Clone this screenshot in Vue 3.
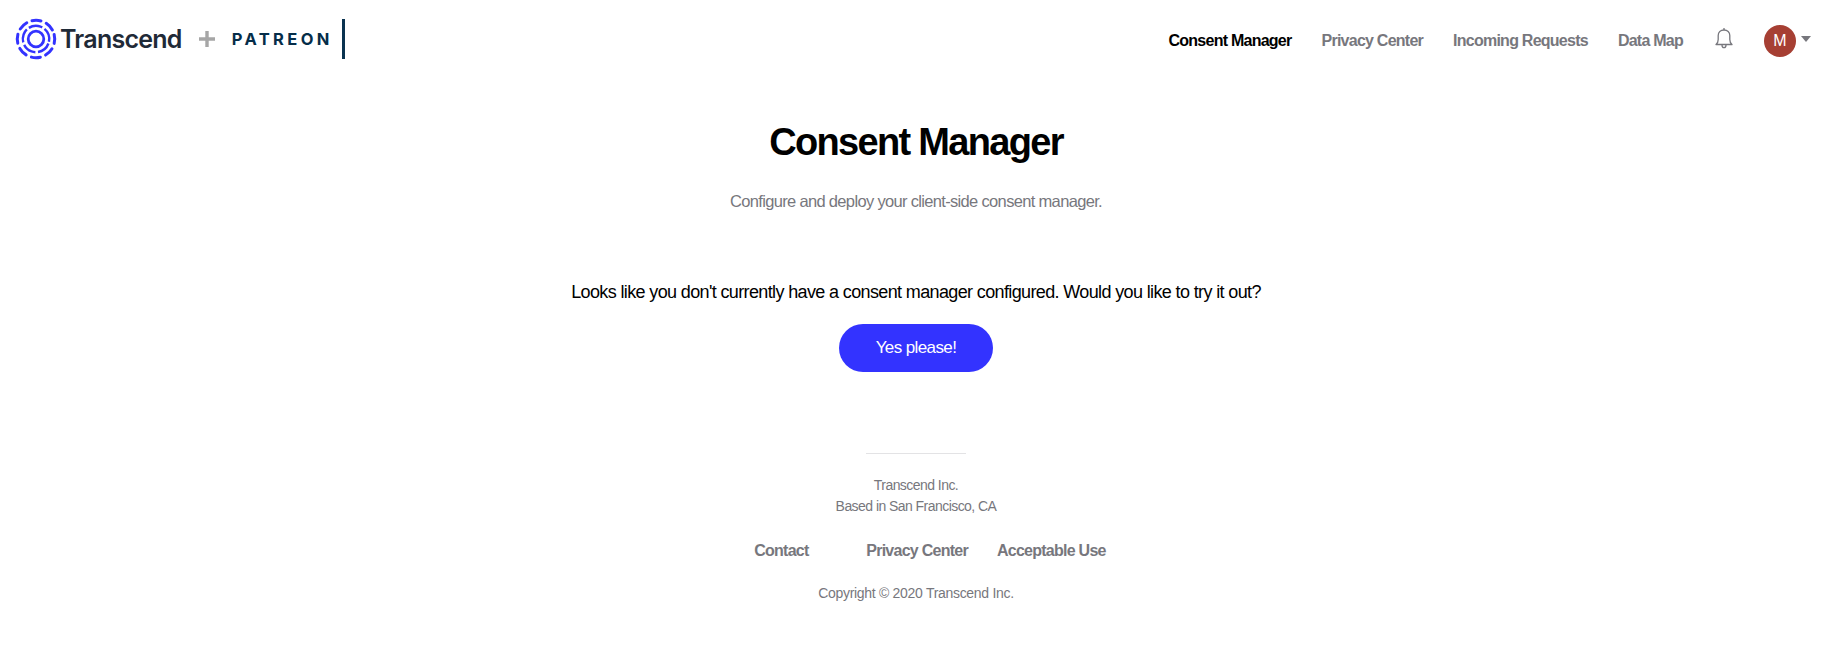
<template>
  <div class="page">
    <header class="topbar">
      <div class="brand">
        <svg class="brand-mark" width="42" height="42" viewBox="0 0 42 42" fill="none" stroke="#3333ff">
          <circle cx="21" cy="21" r="18.7" stroke-width="3" stroke-linecap="round" stroke-dasharray="9 5.69" transform="rotate(-14 21 21)" />
          <circle cx="21" cy="21" r="13.2" stroke-width="2.4" stroke-dasharray="14 2.6" transform="rotate(20 21 21)" />
          <circle cx="21" cy="21" r="7.800" stroke-width="2.800" />
        </svg>
        <span class="brand-name">Transcend</span>
        <span class="brand-plus">
          <svg width="16" height="16" viewBox="0 0 16 16" fill="#a6a6a6"><path d="M6.300 0h3.400v6.300H16v3.400H9.700V16H6.300V9.700H0V6.300h6.300z" /></svg>
        </span>
        <span class="partner">PATREON</span>
        <span class="partner-bar"></span>
      </div>

      <nav class="nav">
        <a v-for="item in navItems" :key="item" class="nav-link" :class="{ active: item === 'Consent Manager' }">{{ item }}</a>
        <svg class="bell" width="18" height="22" viewBox="0 0 18 22" fill="none" stroke="#77777d" stroke-width="1.3">
          <path d="M1 17.5c1.6-1.2 2.2-2.6 2.2-5V8.600C3.200 5.200 5.600 3 9 3s5.800 2.200 5.800 5.600v3.900c0 2.400.6 3.800 2.200 5z" stroke-linejoin="round" />
          <path d="M9 1v2M7 18c0 1.700.8 2.700 2 2.700s2-1 2-2.700" />
        </svg>
        <div class="account">
          <span class="avatar">M</span>
          <span class="caret"></span>
        </div>
      </nav>
    </header>

    <main class="content">
      <h1 class="title">Consent Manager</h1>
      <p class="subtitle">Configure and deploy your client-side consent manager.</p>
      <p class="prompt">Looks like you don't currently have a consent manager configured. Would you like to try it out?</p>
      <button class="cta">Yes please!</button>

      <footer class="footer">
        <div class="rule"></div>
        <p class="address">Transcend Inc.<br />Based in San Francisco, CA</p>
        <div class="footer-links">
          <a class="contact">Contact</a>
          <a>Privacy Center</a>
          <a>Acceptable Use</a>
        </div>
        <p class="copyright">Copyright © 2020 Transcend Inc.</p>
      </footer>
    </main>
  </div>
</template>

<script setup>
const navItems = ['Consent Manager', 'Privacy Center', 'Incoming Requests', 'Data Map']
</script>

<style>
html,
body {
  margin: 0;
  background: #fff;
}
</style>

<style scoped>
.page {
  height: 666px;
  overflow: hidden;
  font-family: "Liberation Sans", Arial, sans-serif;
  color: #000;
}

.topbar {
  display: flex;
  justify-content: space-between;
  align-items: center;
  height: 78px;
}

.brand {
  display: flex;
  align-items: center;
  padding-left: 15px;
}

.brand-mark {
  flex: none;
}

.brand-name {
  margin-left: 3px;
  font-family: Inter, sans-serif;
  font-size: 25px;
  font-weight: 600;
  letter-spacing: -0.75px;
  color: #1f2a37;
}

.brand-plus {
  display: flex;
  margin-left: 17px;
}

.partner {
  margin-left: 17px;
  font-family: Inter, sans-serif;
  font-size: 16.5px;
  font-weight: 700;
  letter-spacing: 3.4px;
  color: #052d49;
}

.partner-bar {
  width: 3px;
  height: 40px;
  margin-left: 9px;
  background: #0a3350;
}

.nav {
  display: flex;
  align-items: center;
  padding-right: 34px;
}

.nav-link {
  margin-right: 30px;
  padding-top: 4px;
  font-size: 16px;
  font-weight: 700;
  letter-spacing: -0.75px;
  color: #77777d;
}

.nav-link.active {
  color: #000;
}

.bell {
  margin: 0 31px 2px 2px;
}

.account {
  display: flex;
  align-items: flex-start;
  margin-top: 4px;
}

.avatar {
  display: flex;
  align-items: center;
  justify-content: center;
  width: 32px;
  height: 32px;
  border-radius: 50%;
  background: #a63f33;
  color: #fff;
  font-size: 16px;
}

.caret {
  margin: 11px 0 0 5px;
  border-left: 5px solid transparent;
  border-right: 5px solid transparent;
  border-top: 6px solid #77777d;
}

.content {
  display: flex;
  flex-direction: column;
  align-items: center;
  padding-right: 13px;
}

.title {
  margin: 40px 0 0;
  font-size: 38px;
  line-height: 48px;
  font-weight: 700;
  letter-spacing: -1.68px;
}

.subtitle {
  margin: 23px 0 0;
  font-size: 16.5px;
  line-height: 24px;
  letter-spacing: -0.67px;
  color: #77777d;
}

.prompt {
  margin: 66px 0 0;
  font-size: 18px;
  line-height: 26px;
  letter-spacing: -0.63px;
}

.cta {
  width: 154px;
  height: 48px;
  margin-top: 19px;
  border: 0;
  border-radius: 24px;
  background: #3333ff;
  color: #fff;
  font-family: inherit;
  font-size: 17px;
  letter-spacing: -0.6px;
}

.footer {
  display: flex;
  flex-direction: column;
  align-items: center;
  margin-top: 81px;
}

.rule {
  width: 100px;
  height: 1px;
  background: #e3e3e5;
}

.address {
  margin: 21px 0 0;
  font-size: 14px;
  line-height: 21px;
  letter-spacing: -0.55px;
  text-align: center;
  color: #77777d;
}

.footer-links {
  display: flex;
  gap: 29px;
  margin-top: 23px;
  padding-left: 28px;
  font-size: 16px;
  line-height: 22px;
  font-weight: 700;
  letter-spacing: -0.74px;
  color: #77777d;
}

.contact {
  min-width: 83px;
}

.copyright {
  margin: 21px 0 0;
  font-size: 14px;
  line-height: 21px;
  letter-spacing: -0.3px;
  color: #77777d;
}
</style>
